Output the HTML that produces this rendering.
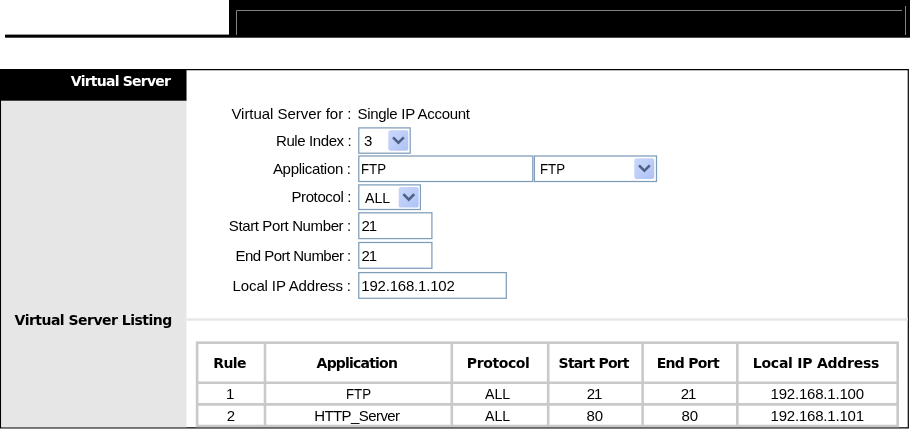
<!DOCTYPE html>
<html><head><meta charset="utf-8">
<title>Virtual Server</title>
<style>
html,body{margin:0;padding:0;background:#fff;}
body{will-change:transform;width:910px;height:429px;position:relative;overflow:hidden;font-family:"Liberation Sans",sans-serif;font-size:15px;color:#000;}
svg{position:absolute;left:0;top:0;}
.t{position:absolute;white-space:nowrap;line-height:18px;height:18px;}
.r{text-align:right;right:559px;}
.b{font-family:"DejaVu Sans","Liberation Sans",sans-serif;font-weight:bold;font-size:14px;letter-spacing:-0.7px;}
.c{text-align:center;}
</style></head><body>
<svg width="910" height="429" viewBox="0 0 910 429">
  <defs>
    <linearGradient id="g" x1="0" y1="0" x2="1" y2="1">
      <stop offset="0" stop-color="#cbd8fc"/><stop offset="1" stop-color="#aec2f4"/>
    </linearGradient>
  </defs>
  <!-- top bar -->
  <rect x="229" y="0" width="681" height="37.7" fill="#000"/>
  <rect x="5" y="34.6" width="224" height="3.1" fill="#000"/>
  <path d="M236.5 35V10.5H902" fill="none" stroke="#848484" stroke-width="1"/>
  <path d="M905.5 6V35" fill="none" stroke="#848484" stroke-width="1"/>
  <!-- panel -->
  <path d="M0 69.1H908.9V428.6H0Z M1.3 70.3V427.2H907.7V70.3Z" fill="#000" fill-rule="evenodd"/>
  <rect x="1.2" y="70" width="185.3" height="357.3" fill="#e6e6e6"/>
  <rect x="0" y="69.1" width="186.5" height="31.6" fill="#000"/>
  <rect x="186.5" y="318.3" width="721.3" height="2.4" fill="#e6e6e6"/>
  <!-- form controls -->
  <g fill="#fff" stroke="#7f9db9" stroke-width="1.25">
    <rect x="358.8" y="127.9" width="51.4" height="25.3"/>
    <rect x="358.8" y="156" width="174" height="25.5"/>
    <rect x="534.4" y="156" width="122.1" height="25.5"/>
    <rect x="358.8" y="184.9" width="61.6" height="24.6"/>
    <rect x="358.8" y="212.8" width="73.1" height="25.8"/>
    <rect x="358.8" y="242.5" width="73.1" height="25.8"/>
    <rect x="358.8" y="272.6" width="147.5" height="25.7"/>
  </g>
  <g id="arrows">
    <g transform="translate(388.3,130.2)"><rect width="20" height="20.6" rx="2.2" fill="url(#g)"/><path d="M3.8 8.1L5.6 6.3L10.1 10.8L14.6 6.3L16.4 8.1L10.1 14.4Z" fill="#4d6185"/></g>
    <g transform="translate(634.3,158.2)"><rect width="20" height="20.8" rx="2.2" fill="url(#g)"/><path d="M3.8 8.1L5.6 6.3L10.1 10.8L14.6 6.3L16.4 8.1L10.1 14.4Z" fill="#4d6185"/></g>
    <g transform="translate(398.7,187)"><rect width="20" height="20.6" rx="2.2" fill="url(#g)"/><path d="M3.8 8.1L5.6 6.3L10.1 10.8L14.6 6.3L16.4 8.1L10.1 14.4Z" fill="#4d6185"/></g>
  </g>
  <!-- table grid -->
  <g fill="none" stroke="#c9c9c9" stroke-width="2.6">
    <rect x="197.1" y="342.7" width="700.6" height="83.3"/>
    <path d="M197 382.8H898M197 404.4H898"/>
    <path d="M265 342.7V426M451.8 342.7V426M548.2 342.7V426M642.6 342.7V426M737.3 342.7V426"/>
  </g>
</svg>

<div class="t b" id="h1" style="color:#fff;left:70.8px;top:72px;letter-spacing:-0.76px">Virtual Server</div>
<div class="t b" id="h2" style="left:14.6px;top:311px;letter-spacing:-0.52px">Virtual Server Listing</div>
<div class="t" id="l1" style="left:231.4px;top:104.5px;letter-spacing:-0.03px">Virtual Server for :</div>
<div class="t" id="v1" style="left:357.5px;top:104.5px;letter-spacing:-0.3px">Single IP Account</div>
<div class="t" id="l2" style="left:276px;top:131.5px;letter-spacing:-0.4px">Rule Index :</div>
<div class="t" id="v2" style="left:364px;top:131.7px;letter-spacing:0px">3</div>
<div class="t" id="l3" style="left:272.9px;top:160px;letter-spacing:-0.3px">Application :</div>
<div class="t" id="v3" style="left:360.6px;top:160px;letter-spacing:0px;transform:scaleX(0.885);transform-origin:0 0">FTP</div>
<div class="t" id="v3b" style="left:540.1px;top:160px;letter-spacing:0px;transform:scaleX(0.885);transform-origin:0 0">FTP</div>
<div class="t" id="l4" style="left:291.4px;top:188.3px;letter-spacing:-0.38px">Protocol :</div>
<div class="t" id="v4" style="left:365.2px;top:188.8px;letter-spacing:0px;transform:scaleX(0.945);transform-origin:0 0">ALL</div>
<div class="t" id="l5" style="left:228.8px;top:217px;letter-spacing:-0.38px">Start Port Number :</div>
<div class="t" id="v5" style="left:361.5px;top:217px;letter-spacing:-1px">21</div>
<div class="t" id="l6" style="left:235.4px;top:246.5px;letter-spacing:-0.52px">End Port Number :</div>
<div class="t" id="v6" style="left:361.5px;top:246.7px;letter-spacing:-1px">21</div>
<div class="t" id="l7" style="left:232.6px;top:277px;letter-spacing:-0.13px">Local IP Address :</div>
<div class="t" id="v7" style="left:361.3px;top:276.5px;letter-spacing:-0.2px">192.168.1.102</div>
<div class="t b" id="th1" style="left:213.2px;top:353.6px;letter-spacing:-0.55px">Rule</div>
<div class="t b" id="th2" style="left:316.6px;top:353.6px;letter-spacing:-0.8px">Application</div>
<div class="t b" id="th3" style="left:466.8px;top:353.6px;letter-spacing:-0.4px">Protocol</div>
<div class="t b" id="th4" style="left:558.6px;top:353.6px;letter-spacing:-0.8px">Start Port</div>
<div class="t b" id="th5" style="left:656.7px;top:353.6px;letter-spacing:-0.7px">End Port</div>
<div class="t b" id="th6" style="left:752.8px;top:353.6px;letter-spacing:-0.24px">Local IP Address</div>
<div class="t" id="a1" style="left:226px;top:385px;letter-spacing:0px">1</div>
<div class="t" id="a2" style="left:345.5px;top:385px;letter-spacing:0px;transform:scaleX(0.885);transform-origin:0 0">FTP</div>
<div class="t" id="a3" style="left:485.4px;top:385px;letter-spacing:0px;transform:scaleX(0.945);transform-origin:0 0">ALL</div>
<div class="t" id="a4" style="left:586.7px;top:385px;letter-spacing:-1px">21</div>
<div class="t" id="a5" style="left:680.7px;top:385px;letter-spacing:-1px">21</div>
<div class="t" id="a6" style="left:770.5px;top:385px;letter-spacing:-0.2px">192.168.1.100</div>
<div class="t" id="b1" style="left:226.7px;top:407px;letter-spacing:0px">2</div>
<div class="t" id="b2" style="left:314.2px;top:407px;letter-spacing:-0.58px">HTTP_Server</div>
<div class="t" id="b3" style="left:485.4px;top:407px;letter-spacing:0px;transform:scaleX(0.945);transform-origin:0 0">ALL</div>
<div class="t" id="b4" style="left:586.5px;top:407px;letter-spacing:0px">80</div>
<div class="t" id="b5" style="left:681.5px;top:407px;letter-spacing:0px">80</div>
<div class="t" id="b6" style="left:770.5px;top:407px;letter-spacing:-0.2px">192.168.1.101</div>
</body></html>
